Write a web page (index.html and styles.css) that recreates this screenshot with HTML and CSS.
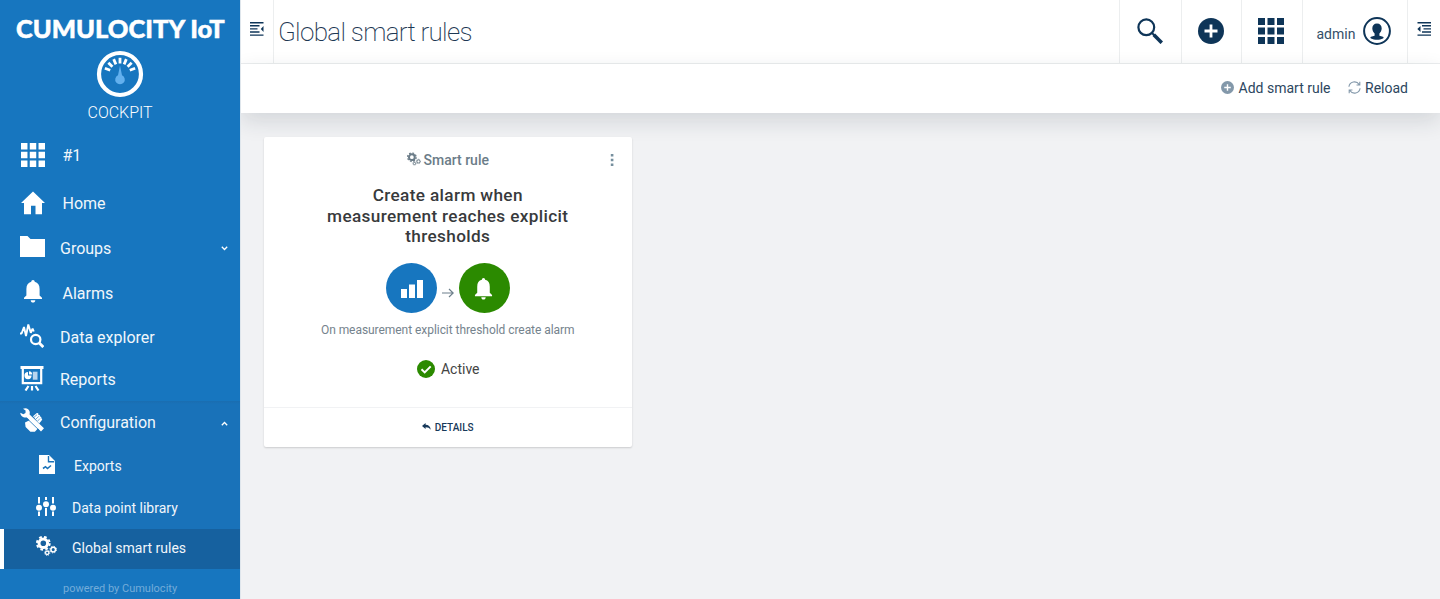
FILE: index.html
```
<!DOCTYPE html>
<html lang="en">
<head>
<meta charset="utf-8">
<title>Global smart rules</title>
<link rel="stylesheet" href="styles.css">
</head>
<body>
<svg class="defs" width="0" height="0">
  <symbol id="grid" viewBox="0 0 26 26"><path d="M0 0h7v7H0zM9.500 0h7v7h-7zM19 0h7v7h-7zM0 9.500h7v7H0zM9.500 9.500h7v7h-7zM19 9.500h7v7h-7zM0 19h7v7H0zM9.500 19h7v7h-7zM19 19h7v7h-7z" fill="currentColor"/></symbol>
  <symbol id="bell" viewBox="0 0 20 23"><path d="M10 0c1 0 1.700.8 1.700 1.800C15 2.600 16.600 5 16.600 9v6.500l2.400 2.300V19H1v-1.200l2.400-2.300V9c0-4 1.600-6.400 4.900-7.200C8.300.8 9 0 10 0zM7.700 20.200h4.600c0 1.500-1 2.400-2.300 2.400s-2.300-.9-2.300-2.400z" fill="currentColor"/></symbol>
  <symbol id="gears" viewBox="0 0 21 20"><g fill="none" stroke="currentColor"><circle cx="7.300" cy="7.300" r="4.300" stroke-width="3"/><circle cx="7.300" cy="7.300" r="6.400" stroke-width="2" stroke-dasharray="2.700 2.327"/><circle cx="17.200" cy="13.600" r="2.300" stroke-width="1.500"/><circle cx="17.200" cy="13.600" r="3.300" stroke-width="1" stroke-dasharray="1.400 1.192"/><circle cx="11.200" cy="16.800" r="1.700" stroke-width="1.300"/><circle cx="11.200" cy="16.800" r="2.600" stroke-width=".9" stroke-dasharray="1.100 .942"/></g></symbol>
  <symbol id="plus" viewBox="0 0 26 26"><circle cx="13" cy="13" r="13" fill="currentColor"/><path d="M13 6.500v13M6.500 13h13" stroke="#fff" stroke-width="2.800"/></symbol>
</svg>
<div class="app">
  <aside class="side">
    <div class="brand">CUMULOCITY IoT</div>
    <svg class="gauge" viewBox="0 0 48 48"><circle cx="24" cy="24" r="21" fill="none" stroke="#fff" stroke-width="4.200"/><g stroke="#fff" stroke-width="2.800"><path d="M24 7.800v5.700" id="tick"/><use href="#tick" transform="rotate(23 24 24)"/><use href="#tick" transform="rotate(46 24 24)"/><use href="#tick" transform="rotate(69 24 24)"/><use href="#tick" transform="rotate(-23 24 24)"/><use href="#tick" transform="rotate(-46 24 24)"/><use href="#tick" transform="rotate(-69 24 24)"/></g><path d="M24 15.500l2 9.700a4.800 4.800 0 1 1-4 0z" fill="#62b0ee"/></svg>
    <div class="appname">COCKPIT</div>
    <nav>
      <a class="item r-one"><svg class="ic i24" viewBox="0 0 26 26"><use href="#grid"/></svg><span>#1</span></a>
      <a class="item r-home"><svg class="ic i24" viewBox="0 0 24 24"><path d="M12 .5L24 12h-3v11.300h-6.500v-8.500h-4.500v8.500H3V12H0z" fill="#fff"/></svg><span>Home</span></a>
      <a class="item r-groups"><svg class="ic folder" viewBox="0 0 25 21"><path d="M0 0h7.500l3 3H25v18H0z" fill="#fff"/></svg><span>Groups</span><svg class="chev" viewBox="0 0 7 5"><path d="M.8.800l2.700 2.700L6.200.8" /></svg></a>
      <a class="item r-alarms"><svg class="ic bell" viewBox="0 0 20 23"><use href="#bell"/></svg><span>Alarms</span></a>
      <a class="item r-data"><svg class="ic i24" viewBox="0 0 24 24"><path d="M0 9.500h1.600L4 3l2 9L8.300.5l2.500 8.300 1.800-4.300 1.200 3" fill="none" stroke="#fff" stroke-width="1.900" stroke-linejoin="bevel"/><circle cx="15.700" cy="15.500" r="4.700" fill="none" stroke="#fff" stroke-width="2.200"/><path d="M19 18.800l4.300 4.300" stroke="#fff" stroke-width="2.800"/></svg><span>Data explorer</span></a>
      <a class="item r-reports"><svg class="ic report" viewBox="0 0 24 25"><path d="M.5 0h23v3h-23z" fill="#fff"/><path d="M2.800 2.500v14.700h18.400V2.500" fill="none" stroke="#fff" stroke-width="2.200"/><path d="M8 6a3.600 3.600 0 1 0 3.600 3.600H8z" fill="#fff"/><path d="M9 5.200v3.400h3.200A3.300 3.300 0 0 0 9 5.200z" fill="#fff"/><path d="M12.800 5.700h4.700v8h-4.700z" fill="#b8d5ee"/><path d="M8.500 20l-3 4.500M12 20v4.500M15.500 20l3 4.500" stroke="#fff" stroke-width="2.200"/></svg><span>Reports</span></a>
      <div class="open">
        <a class="item r-config"><svg class="ic i24" viewBox="0 0 24 24"><path d="M.3 4.700l3 1.500 2.200-1.300.1-2.400L3 .8C6-.6 9.200 1 9.800 4l-.2 2.400L24 20.300 21 23.600 6.800 9.400C3.600 10.200.4 8 .3 4.700z" fill="#fff"/><path d="M5 14.500l5.500-2.800 8 8-3.600 4h-4.500L5.600 19zM13 8.200l3.500-3c1.500-.6 2.500.5 1.500 1.700 1.400-.7 2.500.5 1.700 1.600 1.300-.5 2.200.8 1.400 1.800 1 0 1.500 1.200.7 2l-2.600 3.300z" fill="#fff"/><path d="M6.800 10.300l12.400 12" fill="none" stroke="#1972b9" stroke-width=".8"/><path d="M14 9.300l3-2.600M15.900 11.100l2.900-2.700M17.700 13l2.300-2.500" fill="none" stroke="#1972b9" stroke-width=".6"/></svg><span>Configuration</span><svg class="chev" viewBox="0 0 7 5"><path d="M.8 4.200l2.700-2.700 2.700 2.700"/></svg></a>
        <a class="item sub r-exports"><svg class="ic doc" viewBox="0 0 16 19"><path d="M0 0h10l6 6v13H0z" fill="#fff"/><path d="M9.500 1v5.700h5.700" fill="none" stroke="#1972b9" stroke-width="1.400"/><path d="M4 13.500l2.500-1.800 2 1.800 3.500-3" fill="none" stroke="#1972b9" stroke-width="1.600"/></svg><span>Exports</span></a>
        <a class="item sub r-dpl"><svg class="ic sliders" viewBox="0 0 20 19"><path d="M3 0v6.500M3 14.500V19M10 0v3M10 11v8M17 0v6.500M17 14.500V19" stroke="#fff" stroke-width="2"/><g fill="#fff"><circle cx="3" cy="10.800" r="3"/><circle cx="10" cy="7.200" r="3"/><circle cx="17" cy="10.800" r="3"/></g></svg><span>Data point library</span></a>
        <a class="item sub r-gsr"><svg class="ic gears" viewBox="0 0 21 20"><use href="#gears"/></svg><span>Global smart rules</span></a>
      </div>
    </nav>
    <div class="powered">powered by Cumulocity</div>
  </aside>
  <main class="main">
    <header class="top">
      <div class="toggle"><svg class="lines" viewBox="0 0 14 14"><path d="M0 .700h13.500M0 3.800h9.500M0 6.900h7.500M0 10h9.500M0 13.100h13.500" stroke="currentColor" stroke-width="1.400"/><path d="M13.500 4v6l-2.700-3z" fill="currentColor"/></svg></div>
      <h1><span>Global smart rules</span></h1>
      <div class="cell c-search"><svg class="i26" viewBox="0 0 26 26"><circle cx="9.300" cy="9.300" r="7.900" fill="none" stroke="currentColor" stroke-width="2.200"/><path d="M14.500 14.500l3 3" stroke="currentColor" stroke-width="2"/><path d="M16.800 16.800l8 8" stroke="currentColor" stroke-width="3.600"/></svg></div>
      <div class="cell c-add"><svg class="i26" viewBox="0 0 26 26"><use href="#plus"/></svg></div>
      <div class="cell c-grid"><svg class="i26" viewBox="0 0 26 26"><use href="#grid"/></svg></div>
      <div class="cell c-user"><span>admin</span><svg class="user" viewBox="0 0 28 28"><circle cx="14" cy="14" r="12.900" fill="none" stroke="currentColor" stroke-width="2"/><path d="M14 6.500c3 0 4.800 2 4.700 5-.1 2.300-1.200 3.800-2.300 5v2.200l3.600 1.100c1 .4.700 1.300 0 1.600-3.500 1.900-8.500 1.900-12 0-.7-.3-1-1.200 0-1.600l3.600-1.100v-2.200c-1.100-1.200-2.200-2.700-2.300-5-.1-3 1.700-5 4.700-5z" fill="currentColor"/></svg></div>
      <div class="cell c-right"><svg class="lines" viewBox="0 0 14 14"><path d="M.5.700H14M5 3.800h9M6.500 6.900H14M5 10h9M.5 13.100H14" stroke="currentColor" stroke-width="1.400"/><path d="M.300 7l3.200-3v6z" fill="currentColor"/></svg></div>
    </header>
    <div class="actions">
      <a class="act add"><svg viewBox="0 0 26 26"><use href="#plus"/></svg><span>Add smart rule</span></a>
      <a class="act reload"><svg viewBox="0 0 14 14"><path d="M1 6.200A6 6 0 0 1 12 3.700M13 7.800A6 6 0 0 1 2 10.300M12.700.800v3.500H9.200M1.300 13.200V9.700h3.500" fill="none" stroke="currentColor" stroke-width="1.200"/></svg><span>Reload</span></a>
    </div>
    <section class="content">
      <article class="card">
        <div class="body">
          <div class="kind"><svg viewBox="0 0 21 20"><use href="#gears"/></svg><span>Smart rule</span></div>
          <svg class="dots" viewBox="0 0 4 12"><path d="M.8 0h2.600v2.600H.8zM.8 4.700h2.600v2.600H.8zM.8 9.400h2.600V12H.8z" fill="#768f9e"/></svg>
          <h2>Create alarm when<br>measurement reaches explicit<br>thresholds</h2>
          <div class="flow">
            <div class="disc blue"><svg class="bars" viewBox="0 0 22 18"><path d="M0 9h6v9H0zM8 4.500h6V18H8zM16 0h6v18h-6z" fill="#fff"/></svg></div>
            <svg class="arrow" viewBox="0 0 12 10"><path d="M0 5h11M7 1l4.200 4L7 9" fill="none" stroke="#6d7f8b" stroke-width="1.200"/></svg>
            <div class="disc green"><svg class="dbell" viewBox="0 0 20 23"><use href="#bell"/></svg></div>
          </div>
          <p class="desc"><span>On measurement explicit threshold create alarm</span></p>
          <div class="status"><svg viewBox="0 0 18 18"><circle cx="9" cy="9" r="9" fill="#2b8a00"/><path d="M4.500 9.200l3.200 3.200 6-6" fill="none" stroke="#fff" stroke-width="2"/></svg><span>Active</span></div>
        </div>
        <a class="details"><svg viewBox="0 0 9 7"><path d="M0 3L3.600 0v1.800C6.500 1.900 8.300 3.500 8.800 6.800 7.500 4.900 6 4.200 3.600 4.200V6z" fill="currentColor"/></svg><span>DETAILS</span></a>
      </article>
    </section>
  </main>
</div>
</body>
</html>
```
FILE: styles.css
```
* { box-sizing: border-box; }
body { margin: 0; font-family: Roboto, "Liberation Sans", sans-serif; color: #33424f; background: #f1f2f4; overflow: hidden; }
.defs { display: block; height: 0; }
svg { flex: none; display: block; }
span { white-space: nowrap; }
.app { display: flex; height: 599px; }

.side { width: 240px; flex: none; background: #1776bf; color: #fff; display: flex; flex-direction: column; }
.brand { height: 50px; flex: none; padding: 13px 0 0 16px; font: 900 25.500px/30px Lato, sans-serif; white-space: nowrap; -webkit-text-stroke: .5px #fff; }
.gauge { width: 48px; height: 48px; margin-left: 96px; }
.appname { height: 33px; flex: none; padding-left: 87.500px; font-size: 16px; line-height: 29px; font-weight: 300; }
.item { display: flex; align-items: center; color: #fff; font-size: 16px; }
.item span { color: #f1f6fb; }
.i24 { width: 24px; height: 24px; }
nav { flex: none; }
.r-one { height: 49px; padding-left: 21px; gap: 17.500px; }
.r-one .ic { margin-top: -1px; }
.r-home { height: 46px; padding-left: 21px; gap: 17.500px; }
.r-groups { height: 44px; padding-left: 20px; gap: 15px; }
.folder { width: 25px; height: 21px; margin-top: -3px; }
.r-alarms { height: 46px; padding-left: 23px; gap: 19.500px; }
.bell { width: 20px; height: 23px; margin-top: -3px; }
.r-data { height: 42px; padding-left: 20px; gap: 16px; }
.r-home .ic { margin-top: -1px; }
.r-data .ic { margin-top: -2px; }
.r-reports { height: 43px; padding-left: 20px; gap: 16px; }
.report { width: 24px; height: 25px; margin-top: -2px; }
.open { background: linear-gradient(#1a6db0 0, #1972b9 3px, #1972b9 100%); }
.r-config { height: 43px; padding-left: 20px; gap: 16px; }
.r-config .ic { margin-top: -5px; }
.r-config .chev { margin-top: 1px; }
.chev { width: 7px; height: 5px; margin-left: auto; margin-right: 12.500px; fill: none; stroke: #fff; stroke-width: 1.300; }
.sub { font-size: 14px; }
.r-exports { height: 43px; padding-left: 39px; gap: 19px; }
.doc { width: 16px; height: 19px; margin-top: -3px; }
.r-dpl { height: 41.500px; padding-left: 36px; gap: 16px; }
.sliders { width: 20px; height: 19px; margin-top: -3px; }
.r-gsr { height: 40.500px; padding: 0 0 2px 32px; gap: 15px; background: #16619f; border-left: 4px solid #fff; }
.gears { width: 21px; height: 20px; margin-top: -3px; }
.powered { padding-left: 63px; font-size: 11px; line-height: 40px; height: 30px; color: #74acd9; }

.main { flex: 1; display: flex; flex-direction: column; min-width: 0; overflow: hidden; border-left: 1px solid #dfe6ec; }
.top { height: 64px; background: #fff; border-bottom: 1px solid #eceeef; display: flex; color: #0e3558; }
.toggle { width: 33px; border-right: 1px solid #eceeef; padding: 22px 0 0 9px; }
.lines { width: 14px; height: 14px; }
h1 { flex: 1; margin: 0; padding-left: 4px; font-size: 26px; line-height: 64px; font-weight: 200; letter-spacing: -.7px; color: #1d3853; }
.cell { border-left: 1px solid #eceeef; display: flex; align-items: center; }
.i26 { width: 26px; height: 26px; margin-top: -1px; }
.c-search { width: 62px; padding-left: 16.500px; }
.c-add { width: 60px; padding-left: 15.500px; }
.c-grid { width: 60.500px; padding-left: 16px; }
.c-user { width: 105.500px; padding-left: 14px; gap: 7.500px; font-size: 14px; color: #0e3558; }
.c-user span { padding-top: 5px; color: #344f69; }
.user { width: 28px; height: 28px; margin-top: -1px; }
.c-right { width: 33px; padding: 22px 0 0 8.500px; align-items: flex-start; }
.actions { height: 48.500px; background: #fff; box-shadow: 0 8px 22px rgba(30, 45, 55, .14); display: flex; justify-content: flex-end; align-items: center; padding: 0 32px 1px 0; gap: 17px; font-size: 14px; color: #2c4660; }
.act { display: flex; align-items: center; gap: 4.500px; }
.act svg { width: 13px; height: 13px; margin-top: -1px; color: #8398aa; }
.content { padding: 24px 23px; }
.card { width: 367.500px; height: 310px; background: #fff; border-radius: 2px; box-shadow: 0 1px 2px rgba(0, 0, 0, .16); display: flex; flex-direction: column; }
.body { height: 271px; flex: none; position: relative; display: flex; flex-direction: column; align-items: center; border-bottom: 1px solid #f1f2f4; }
.kind { display: flex; align-items: center; height: 20px; margin-top: 13px; gap: 3px; font-size: 14px; font-weight: 500; color: #6b7c88; }
.kind svg { width: 14px; height: 14px; margin-top: -1px; }
.dots { position: absolute; right: 18px; top: 17px; width: 4px; height: 12px; }
h2 { margin: 15.500px 0 0; text-align: center; font-size: 17.200px; letter-spacing: .36px; line-height: 20.700px; font-weight: 500; color: #383a3c; }
.flow { display: flex; align-items: center; margin-top: 15.500px; gap: 5px; }
.disc { width: 51px; height: 50px; border-radius: 50%; display: flex; align-items: center; justify-content: center; color: #fff; }
.blue { background: #1776bf; }
.green { background: #2b8a00; }
.bars { width: 22px; height: 18px; margin: 2px 0 0 1px; }
.arrow { width: 12px; height: 10px; margin-top: 10px; }
.dbell { width: 19px; height: 22px; margin: 2px 1px 0 0; }
.desc { margin: 8px 0 0; font-size: 12px; letter-spacing: -.05px; line-height: 18px; color: #75838d; }
.status { display: flex; align-items: center; margin-top: 21px; gap: 6px; padding-left: 1px; font-size: 14px; color: #444; }
.status svg { width: 18px; height: 18px; }
.details { flex: 1; display: flex; align-items: center; justify-content: center; gap: 4px; font-size: 10px; font-weight: 500; color: #17395a; }
.details svg { width: 9px; height: 7px; margin-top: -2px; }
```
